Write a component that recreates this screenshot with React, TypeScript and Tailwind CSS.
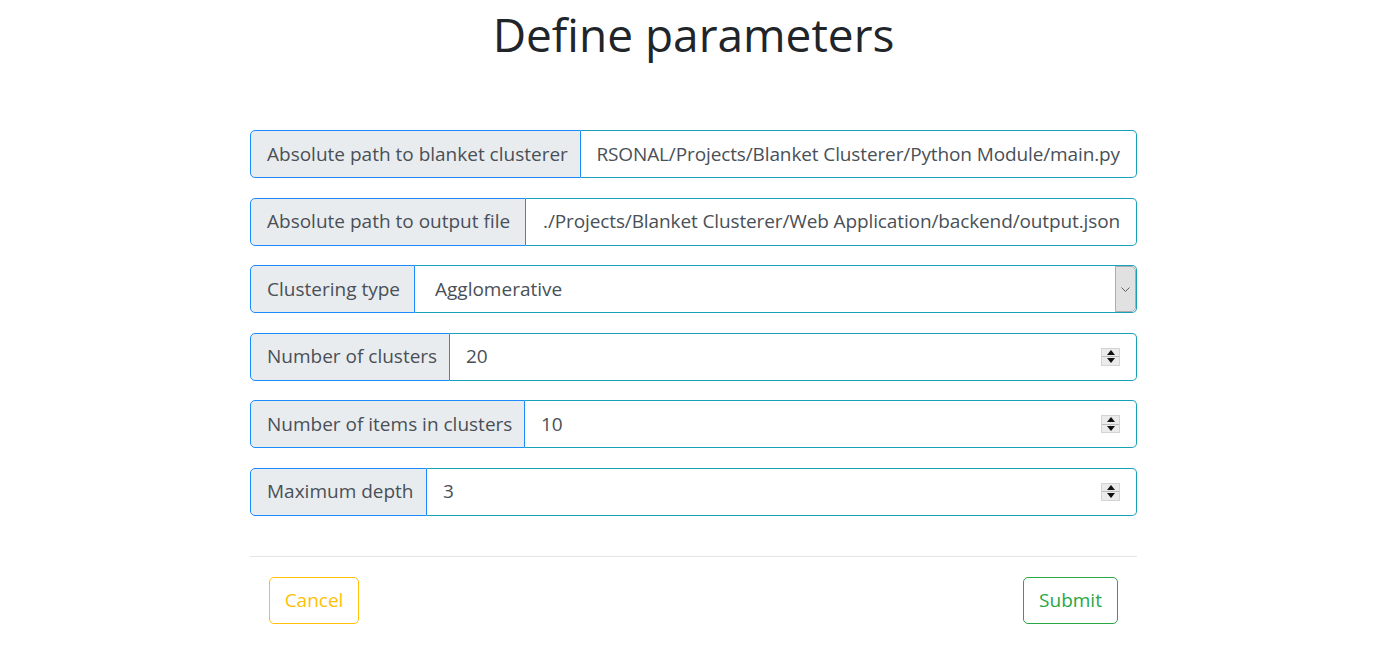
import React from "react";

const font = { fontFamily: '"Open Sans", "Noto Sans", sans-serif' };

interface RowProps {
  label: string;
  labelWidth: string;
  children: React.ReactNode;
}

const Row = ({ label, labelWidth, children }: RowProps) => (
  <div className="flex h-[48px] w-full">
    <div
      className={`${labelWidth} shrink-0 flex items-center px-4 bg-[#e9ecef] border border-[#1a8cff] rounded-l-[5px] text-[19px] text-[#495057] whitespace-nowrap`}
    >
      {label}
    </div>
    <div className="relative flex-1 min-w-0 flex items-center border border-[#17a2b8] border-l-0 rounded-r-[5px] bg-white text-[19px] text-[#495057]">
      {children}
    </div>
  </div>
);

// long paths are scrolled to their end, as in a focused text field
const PathValue = ({ value }: { value: string }) => (
  <div className="mx-4 flex-1 min-w-0 overflow-hidden flex justify-end whitespace-nowrap tracking-[-0.12px]">
    <span className="shrink-0">{value}</span>
  </div>
);

const Spinner = () => (
  <div className="absolute right-[16px] top-1/2 -translate-y-1/2 w-[19px] h-[18px] flex flex-col bg-[#ebebeb] border border-[#d4d4d4]">
    <div className="flex-1 flex items-center justify-center border-b border-[#bdbdbd]">
      <svg width="8" height="5" viewBox="0 0 8 5">
        <path d="M0 5 L4 0 L8 5 Z" fill="#111" />
      </svg>
    </div>
    <div className="flex-1 flex items-center justify-center">
      <svg width="8" height="5" viewBox="0 0 8 5">
        <path d="M0 0 L4 5 L8 0 Z" fill="#111" />
      </svg>
    </div>
  </div>
);

const NumberValue = ({ value }: { value: string }) => (
  <>
    <span className="pl-4">{value}</span>
    <Spinner />
  </>
);

export default function App() {
  return (
    <div className="min-h-screen bg-white" style={font}>
      <h1 className="pt-[4px] text-center text-[46px] leading-[60px] text-[#212529]">
        Define parameters
      </h1>

      <div className="mx-auto mt-[66px] w-[887px] flex flex-col gap-[19.5px]">
        <Row label="Absolute path to blanket clusterer" labelWidth="w-[331px]">
          <PathValue value="RSONAL/Projects/Blanket Clusterer/Python Module/main.py" />
        </Row>
        <Row label="Absolute path to output file" labelWidth="w-[276px]">
          <PathValue value="./Projects/Blanket Clusterer/Web Application/backend/output.json" />
        </Row>
        <Row label="Clustering type" labelWidth="w-[165px]">
          <span className="pl-5">Agglomerative</span>
          <div className="absolute right-0 top-0 bottom-0 w-[21px] bg-[#e1e1e1] border border-[#adadad] rounded-r-[5px] flex items-center justify-center">
            <svg width="9" height="5" viewBox="0 0 9 5">
              <path d="M0.5 0.5 L4.5 4.5 L8.5 0.5" fill="none" stroke="#606060" strokeWidth="1" />
            </svg>
          </div>
        </Row>
        <Row label="Number of clusters" labelWidth="w-[200px]">
          <NumberValue value="20" />
        </Row>
        <Row label="Number of items in clusters" labelWidth="w-[275px]">
          <NumberValue value="10" />
        </Row>
        <Row label="Maximum depth" labelWidth="w-[177px]">
          <NumberValue value="3" />
        </Row>
      </div>

      <div className="mx-auto mt-[40px] w-[887px] border-t border-[#e5e5e5] pt-[20px] px-[19px] flex justify-between">
        <button className="h-[47px] w-[90px] border border-[#ffc107] rounded-[5px] text-[#ffc107] text-[19px]">
          Cancel
        </button>
        <button className="h-[47px] w-[95px] border border-[#28a745] rounded-[5px] text-[#28a745] text-[19px]">
          Submit
        </button>
      </div>
    </div>
  );
}
